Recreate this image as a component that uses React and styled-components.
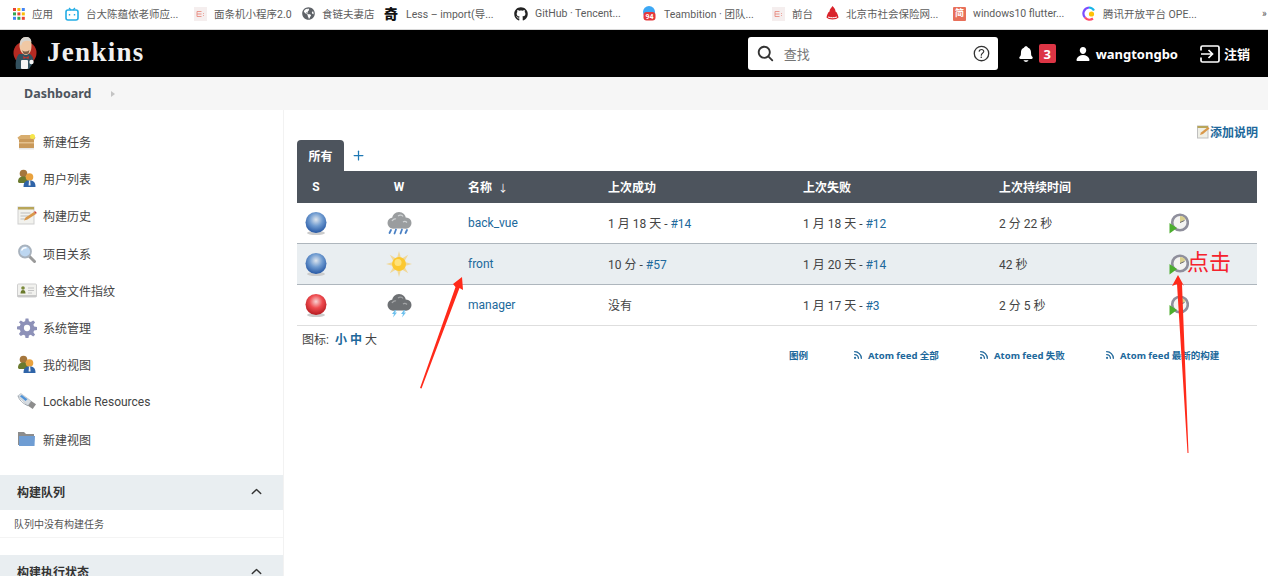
import React from 'react';
import styled, { createGlobalStyle } from 'styled-components';
import { IoSearch, IoHelpCircleOutline, IoNotifications, IoPerson, IoChevronUp } from 'react-icons/io5';
import { FaGithub, FaGlobeAmericas } from 'react-icons/fa';
import { Rss, Plus } from 'lucide-react';

const GlobalStyle = createGlobalStyle`
  html, body {
    margin: 0;
    height: 576px;
    overflow: hidden;
    background: #fff;
  }
  body {
    font-family: Roboto, "Noto Sans CJK SC", sans-serif;
    color: #333;
  }
`;

const Page = styled.div`
  position: relative;
  width: 1268px;
  height: 576px;
  overflow: hidden;
`;

/* browser bookmarks */
const BookmarkBar = styled.div`
  display: flex;
  align-items: center;
  box-sizing: border-box;
  height: 30px;
  padding: 0 0 2px 13px;
  border-bottom: 1px solid #d8d8d8;
  background: #fff;
`;

const Bookmark = styled.div`
  display: flex;
  align-items: center;
  gap: 7px;
  flex: 0 0 ${(p) => p.$w}px;
  font-size: 10.5px;
  color: #5c5c5c;
  white-space: nowrap;
`;

const FavSquare = styled.span`
  display: flex;
  align-items: center;
  justify-content: center;
  width: 13px;
  height: 14px;
  border-radius: 1px;
  background: ${(p) => p.$bg};
  color: ${(p) => p.$fg};
  font-size: 9px;
  font-weight: 700;
  line-height: 1;
`;

const QiGlyph = styled.span`
  width: 15px;
  font-size: 14px;
  font-weight: 900;
  color: #111;
  line-height: 1;
`;

const MoreMark = styled.span`
  font-size: 10px;
  color: #555;
`;

/* jenkins header */
const Header = styled.header`
  display: flex;
  align-items: center;
  height: 47px;
  padding: 0 18px 0 13px;
  background: #000;
  color: #fff;
  font-family: "Noto Sans", "Noto Sans CJK SC", sans-serif;
`;

const Brand = styled.div`
  display: flex;
  align-items: center;
  gap: 10px;
  margin-right: auto;
  padding-bottom: 2px;
`;

const BrandName = styled.span`
  font-family: "Liberation Serif", serif;
  font-size: 27px;
  font-weight: 700;
  letter-spacing: 1.3px;
  color: #f0f0f0;
`;

const SearchBox = styled.div`
  display: flex;
  align-items: center;
  width: 250px;
  height: 33px;
  padding: 0 6px 0 8px;
  box-sizing: border-box;
  border-radius: 3px;
  background: #fff;
  color: #333;
`;

const SearchHint = styled.span`
  flex: 1;
  margin-left: 9px;
  font-size: 13px;
  color: #757575;
`;

const HeaderItem = styled.div`
  display: flex;
  align-items: center;
  margin-left: ${(p) => p.$ml}px;
  gap: ${(p) => p.$gap}px;
  font-size: 13px;
  font-weight: 700;
  color: #fff;
`;

const Badge = styled.span`
  display: flex;
  align-items: center;
  justify-content: center;
  width: 17px;
  height: 19px;
  border-radius: 2px;
  background: #dc3545;
  font-size: 13px;
  font-weight: 700;
`;

/* breadcrumb */
const Crumbs = styled.div`
  display: flex;
  align-items: center;
  height: 33px;
  padding-left: 24px;
  background: #f6f6f6;
  font-family: "Noto Sans", sans-serif;
  font-size: 12.5px;
  font-weight: 700;
  color: #4d545d;
`;

const CrumbArrow = styled.span`
  margin-left: 20px;
  width: 0;
  height: 0;
  border-left: 4px solid #c4c4c4;
  border-top: 3px solid transparent;
  border-bottom: 3px solid transparent;
`;

const Body = styled.div`
  display: flex;
  height: 466px;
`;

/* left column */
const Side = styled.aside`
  flex: 0 0 283px;
  padding-top: 13px;
  border-right: 1px solid #f2f2f2;
`;

const TaskRow = styled.div`
  display: flex;
  align-items: center;
  gap: 6px;
  height: 37.2px;
  padding-left: 17px;
  font-size: 12px;
  color: #444;
`;

const TaskIcon = styled.span`
  display: flex;
  flex: 0 0 20px;
  justify-content: flex-start;
`;

const PanelHead = styled.div`
  display: flex;
  align-items: center;
  justify-content: space-between;
  box-sizing: border-box;
  height: 35px;
  margin-top: ${(p) => p.$mt}px;
  padding: 0 19px 2px 17px;
  background: #e9eef1;
  font-size: 12px;
  font-weight: 700;
  color: #333;
`;

const PanelBody = styled.div`
  display: flex;
  align-items: center;
  box-sizing: border-box;
  height: 28px;
  padding: 1px 0 0 14px;
  border-bottom: 1px solid #f4f4f4;
  font-size: 10px;
  color: #555;
`;

/* right column */
const Main = styled.main`
  flex: 1;
  padding: 13px 11px 0 13px;
`;

const AddRow = styled.div`
  display: flex;
  justify-content: flex-end;
  align-items: center;
  height: 17px;
  margin-right: -1px;
`;

const AddLink = styled.a`
  display: flex;
  align-items: center;
  font-size: 12px;
  font-weight: 700;
  color: #20689b;
`;

const Tabs = styled.div`
  display: flex;
  align-items: center;
  height: 31px;
`;

const Tab = styled.div`
  display: flex;
  align-items: center;
  justify-content: center;
  width: 47px;
  height: 31px;
  border-radius: 4px 4px 0 0;
  background: #4d545d;
  font-size: 12px;
  font-weight: 700;
  color: #fff;
`;

const AddTab = styled.span`
  display: flex;
  margin-left: 7px;
  color: #1f78b4;
`;

const Row = styled.div`
  display: grid;
  grid-template-columns: 38px 128px 140px 195px 196px 170px 93px;
  align-items: center;
  height: ${(p) => (p.$head ? 32 : 40)}px;
  background: ${(p) => (p.$head ? '#4d545d' : p.$shade ? '#e9eef1' : '#fff')};
  color: ${(p) => (p.$head ? '#fff' : '#444')};
  border-bottom: ${(p) => (p.$head ? 0 : 1)}px solid ${(p) => (p.$last ? '#dedede' : '#aeb6bd')};
  font-size: 12px;
  font-weight: ${(p) => (p.$head ? 700 : 400)};
`;

const Cell = styled.div`
  display: flex;
  align-items: center;
  justify-content: ${(p) => (p.$center ? 'center' : 'flex-start')};
  padding-left: ${(p) => (p.$pl === undefined ? 5 : p.$pl)}px;
  white-space: nowrap;
`;

const CellText = styled.span`
  margin-top: -1px;
`;

const Arrow = styled.span`
  margin-left: 6px;
  font-size: 10px;
  font-weight: 400;
`;

const Link = styled.a`
  color: #20689b;
  font-weight: ${(p) => (p.$bold ? 700 : 400)};
`;

const IconSizes = styled.div`
  display: flex;
  gap: 3px;
  padding: 4px 0 0 5px;
  height: 15px;
  font-size: 12px;
  color: #444;
`;

const Legend = styled.div`
  display: flex;
  align-items: center;
  padding-left: 492px;
  margin-top: 3px;
`;

const LegendItem = styled.a`
  display: flex;
  align-items: center;
  gap: 5px;
  flex: 0 0 ${(p) => p.$w}px;
  font-family: "Noto Sans", "Noto Sans CJK SC", sans-serif;
  font-size: 9.5px;
  font-weight: 700;
  color: #20689b;
  white-space: nowrap;
`;

/* hand drawn marks on top of the screenshot */
const Marks = styled.svg`
  position: absolute;
  left: 0;
  top: 0;
  pointer-events: none;
`;

const ClickNote = styled.span`
  position: absolute;
  left: 1187px;
  top: 248px;
  font-size: 22px;
  line-height: 30px;
  color: #f5222d;
`;

/* ---------- drawings ---------- */

const AppsIcon = () => (
  <svg width="12" height="12" viewBox="0 0 12 12">
    {[0, 1, 2].map((r) =>
      [0, 1, 2].map((c) => (
        <rect
          key={`${r}${c}`}
          x={c * 4.4}
          y={r * 4.4}
          width="3"
          height="3"
          fill={[['#ea4335', '#fbbc05', '#4285f4'], ['#34a853', '#ea4335', '#fbbc05'], ['#4285f4', '#34a853', '#ea4335']][r][c]}
        />
      ))
    )}
  </svg>
);

const BiliIcon = () => (
  <svg width="14" height="14" viewBox="0 0 14 14">
    <path d="M4 1l2 2M10 1L8 3" stroke="#23ade5" strokeWidth="1.2" />
    <rect x="1" y="3" width="12" height="10" rx="2" fill="none" stroke="#23ade5" strokeWidth="1.6" />
    <path d="M4.5 7v1.5M9.5 7v1.5" stroke="#23ade5" strokeWidth="1.4" />
  </svg>
);

const PaleFavicon = () => (
  <svg width="13" height="14" viewBox="0 0 13 14">
    <rect width="13" height="14" fill="#f5eeee" />
    <path d="M3 4.5h4.5M3 7h4.5M3 9.5h4.5M3 4.5v5" stroke="#e98b80" strokeWidth="0.9" fill="none" />
    <path d="M9.5 6v.8M9.5 8v.8" stroke="#e98b80" strokeWidth="0.9" />
  </svg>
);

const TeambitionIcon = () => (
  <svg width="15" height="15" viewBox="0 0 15 15">
    <circle cx="7" cy="6" r="6" fill="#3da8f5" />
    <rect x="1.5" y="6" width="12" height="8.5" rx="3" fill="#e4393c" />
    <text x="7.5" y="13" fontSize="7" fontWeight="700" fill="#fff" textAnchor="middle">94</text>
  </svg>
);

const BeijingIcon = () => (
  <svg width="13" height="15" viewBox="0 0 13 15">
    <path d="M6.5 0C8 2 9.5 3 9.5 5.5c2 1 2.5 4 3 6-2 2.5-10 2.5-12 0 .5-2 1-5 3-6C3.5 3 5.5 2 6.5 0z" fill="#d9232b" />
    <path d="M2 11c3 1 6 1 9 0" stroke="#fff" fill="none" />
  </svg>
);

const TencentIcon = () => (
  <svg width="14" height="15" viewBox="0 0 14 15">
    <path d="M7 1.5a6 6 0 0 0-4 10" stroke="#7c4dff" strokeWidth="2.2" fill="none" />
    <path d="M7 1.5a6 6 0 0 1 5 3" stroke="#19b5e8" strokeWidth="2.2" fill="none" />
    <path d="M3 11.5a6 6 0 0 0 8 1" stroke="#ff4d6a" strokeWidth="2.2" fill="none" />
    <circle cx="9.5" cy="8" r="2.6" fill="#ffc107" />
  </svg>
);

const JenkinsLogo = () => (
  <svg width="24" height="34" viewBox="0 0 24 34">
    <circle cx="12" cy="17" r="11.5" fill="#b52a22" />
    <path d="M3 33c-1-6 0-12 3-15h11c3 2 4 5 3 9l-4 6z" fill="#33515f" />
    <path d="M6.5 10c0-6 3-9 6.5-9s5.5 3 5.5 8c0 5-1 9-5.5 10-4-.5-6-4-6.5-9z" fill="#f0c8a4" />
    <path d="M7 8c0-4 2-7 6-7s5 2 5.5 5C15 4 11 4.5 9 7L8 10z" fill="#d8d5d0" />
    <path d="M9 14c2 2 5 2 7.5 0l-1 3.5c-2 1-4 1-5 0z" fill="#7c5a43" />
    <path d="M10 20l3 1.5 3-1.5-.5 3-2.500-1-2.500 1z" fill="#c7312b" />
    <rect x="8" y="24" width="7" height="9" rx="1" fill="#f4f4f4" />
    <circle cx="18.5" cy="26" r="2.2" fill="#f4f4f4" />
  </svg>
);

const LogoutIcon = () => (
  <svg width="20" height="18" viewBox="0 0 20 18" fill="none" stroke="#fff" strokeWidth="1.7">
    <path d="M1 5.500V2.500A1.500 1.500 0 0 1 2.500 1h15A1.500 1.500 0 0 1 19 2.500v13a1.500 1.500 0 0 1-1.500 1.500h-15A1.500 1.500 0 0 1 1 15.500v-3" />
    <path d="M1 9h11M8.500 5l4 4-4 4" />
  </svg>
);

const BoxIcon = () => (
  <svg width="19" height="16" viewBox="0 0 19 16">
    <path d="M0.5 3.5L4 1h11l3.500 2.500-1 2H1.500z" fill="#d8ad6e" />
    <rect x="2" y="5" width="15" height="9.5" rx="1" fill="#c9995a" />
    <rect x="2" y="8" width="15" height="1.5" fill="#e3c08d" />
    <rect x="2" y="14" width="15" height="1.5" fill="#e6e6e6" />
    <circle cx="15.5" cy="2.5" r="2.5" fill="#f6e64a" />
  </svg>
);

const UsersIcon = () => (
  <svg width="19" height="19" viewBox="0 0 19 19">
    <circle cx="6.5" cy="4.5" r="3.8" fill="#a5763c" />
    <path d="M1 13c0-4 2-5.500 5.500-5.500S11 9 11 14H2z" fill="#6b7a2e" />
    <circle cx="12.5" cy="8" r="3.8" fill="#e9a23e" />
    <path d="M6.500 18c0-5 2-6.500 6-6.500s6 1.500 6 6.500z" fill="#2f64a8" />
    <path d="M12 11.500h1.200l.4 5h-2z" fill="#f1f1f1" />
  </svg>
);

const NotepadIcon = () => (
  <svg width="20" height="19" viewBox="0 0 20 19">
    <rect x="1" y="1" width="16" height="17" fill="#f2f2ee" stroke="#cfcfcf" />
    <rect x="1" y="1" width="16" height="2.5" fill="#b8a65a" />
    <path d="M3.500 7h10M3.500 10h8M3.500 13h6" stroke="#bdbdbd" />
    <path d="M7 14.500l1.500-3L17 6l2 2-8.500 5.500z" fill="#d9984a" />
    <path d="M17 6l2 2 .7-1.200-1.700-1.800z" fill="#c9443a" />
  </svg>
);

const MagnifierIcon = () => (
  <svg width="20" height="19" viewBox="0 0 20 19">
    <path d="M12 12l5.500 5.500" stroke="#9a9a9a" strokeWidth="3" strokeLinecap="round" />
    <circle cx="8" cy="7.5" r="6" fill="#bcd6f0" stroke="#a8b2bd" strokeWidth="1.8" />
    <path d="M4.500 6.500c1-2 3-3 5-2.500" stroke="#fff" strokeWidth="1.5" fill="none" />
  </svg>
);

const CardIcon = () => (
  <svg width="20" height="15" viewBox="0 0 20 15">
    <rect x="0.5" y="1" width="19" height="13" rx="1" fill="#f1f1ee" stroke="#cfcfcf" />
    <rect x="0.5" y="12" width="19" height="2" fill="#c9c9c9" />
    <circle cx="6" cy="5" r="1.8" fill="#7b8a3a" />
    <path d="M3.500 10.500c0-2.500 1-3.500 2.500-3.500s2.500 1 2.500 3.500z" fill="#6a7a2c" />
    <path d="M11 5h6M11 7.500h6M11 10h4" stroke="#c4c4c4" />
  </svg>
);

const GearIcon = () => (
  <svg width="20" height="20" viewBox="0 0 21 21">
    <path
      d="M9 0.500h3l.5 3 2 .8 2.500-1.800 2 2-1.800 2.500.8 2 3 .5v3l-3 .5-.8 2 1.800 2.500-2 2-2.500-1.800-2 .8-.5 3H9l-.5-3-2-.8L4 18.800l-2-2 1.800-2.500-.8-2-3-.5v-3l3-.5.8-2L2 4.500l2-2 2.500 1.800 2-.8z"
      fill="#8d91b8"
    />
    <circle cx="10.5" cy="10.5" r="3.3" fill="#fff" />
  </svg>
);

const UsbIcon = () => (
  <svg width="20" height="18" viewBox="0 0 21 19">
    <path d="M1 3l3-2.500 11 8-3.500 5z" fill="#d6dce2" stroke="#aab2ba" strokeWidth="0.6" />
    <path d="M3 3.500l2-1.500 6 4.500-2 2z" fill="#4f93d8" />
    <path d="M11.500 13.500L15 8.500l5 3.500-3.500 5z" fill="#8d8d8d" />
    <path d="M1 3c1 4 5 8 10.500 10.500" stroke="#9aa3ab" fill="none" />
  </svg>
);

const FolderIcon = () => (
  <svg width="19" height="16" viewBox="0 0 19 16">
    <path d="M1 1h6l2 2h8v11H1z" fill="#8c8c8c" />
    <path d="M2 5h16l-.5 10H2z" fill="#6f9dd3" />
  </svg>
);

const Ball = ({ id, light, mid, dark }) => (
  <svg width="24" height="24" viewBox="0 0 24 24">
    <defs>
      <radialGradient id={id} cx="50%" cy="36%" r="62%">
        <stop offset="0%" stopColor={light} />
        <stop offset="50%" stopColor={mid} />
        <stop offset="100%" stopColor={dark} />
      </radialGradient>
    </defs>
    <ellipse cx="12" cy="22" rx="9" ry="2" fill="#ccc" />
    <circle cx="12" cy="11.5" r="10.5" fill={`url(#${id})`} />
  </svg>
);

const BlueBall = ({ id }) => <Ball id={id} light="#dfe6ee" mid="#6f9bd0" dark="#2a5ba6" />;
const RedBall = ({ id }) => <Ball id={id} light="#f8d3d3" mid="#ee4b4f" dark="#b81d22" />;

const CloudShape = ({ fill, hi }) => (
  <>
    <circle cx="7" cy="12" r="5.5" fill={fill} />
    <circle cx="13" cy="8" r="7" fill={fill} />
    <circle cx="20" cy="12" r="5.5" fill={fill} />
    <rect x="5" y="12" width="17" height="5.5" rx="2" fill={fill} />
    <path d="M6 10c1-2 3-2.500 4-2M12 5c2-1.500 4-1 5 .5M17 11c1.500-1 3-.5 4 .5" stroke={hi} strokeWidth="1.3" fill="none" />
  </>
);

const RainCloud = () => (
  <svg width="26" height="25" viewBox="0 0 26 25">
    <CloudShape fill="#9a9d9f" hi="#cfd2d4" />
    <path d="M5 19l-1.500 3M10 18.500l-1.500 4M16 18.500l-1.500 4M21 19l-1.500 3" stroke="#4a80c4" strokeWidth="1.8" strokeLinecap="round" />
  </svg>
);

const StormCloud = () => (
  <svg width="26" height="25" viewBox="0 0 26 25">
    <CloudShape fill="#6d7073" hi="#a2a4a6" />
    <path d="M9 17l-3 4h2l-1 3.500 4-5H9l1.500-2.500zM18 17l-3 4h2l-1 3.500 4-5h-2l1.500-2.500z" fill="#6ec1ee" />
  </svg>
);

const SunIcon = () => (
  <svg width="26" height="26" viewBox="0 0 26 26">
    {[0, 45, 90, 135, 180, 225, 270, 315].map((a) => (
      <path key={a} d="M13 0l2.200 8h-4.400z" fill="#f0d89a" transform={`rotate(${a} 13 13)`} />
    ))}
    <circle cx="13" cy="13" r="7" fill="#fcc82f" />
    <circle cx="12" cy="11.5" r="3.5" fill="#ffe27a" />
  </svg>
);

const BuildIcon = () => (
  <svg width="20" height="21" viewBox="0 0 20 21">
    <circle cx="11" cy="9.5" r="7.8" fill="#f4f4f2" stroke="#8f8f9c" strokeWidth="2.6" />
    <path d="M11 9.500V3a6.500 6.500 0 0 1 5.600 3.200z" fill="#d9cf8c" />
    <path d="M11 9.500l4.500-2" stroke="#666" />
    <path d="M0.500 10l7.500 5-7.500 5.500z" fill="#4cae2f" />
  </svg>
);

const EditIcon = () => (
  <svg width="13" height="14" viewBox="0 0 13 14">
    <rect x="0.5" y="1" width="10.5" height="12" fill="#efefe6" stroke="#bfbfbf" />
    <rect x="0.5" y="1" width="10.5" height="2" fill="#b8a65a" />
    <path d="M3 10l1-2.500L11 2l1.500 1.500L6 9z" fill="#d9984a" />
  </svg>
);

const bookmarks = [
  { w: 52, icon: <AppsIcon />, label: '应用' },
  { w: 129, icon: <BiliIcon />, label: '台大陈蕴侬老师应...' },
  { w: 108, icon: <PaleFavicon />, label: '面条机小程序2.0' },
  { w: 82, icon: <FaGlobeAmericas size={13} color="#5f6368" />, label: '食链夫妻店' },
  { w: 130, icon: <QiGlyph>奇</QiGlyph>, label: 'Less – import(导...' },
  { w: 128, icon: <FaGithub size={14} color="#222" />, label: 'GitHub · Tencent...' },
  { w: 130, icon: <TeambitionIcon />, label: 'Teambition · 团队...' },
  { w: 54, icon: <PaleFavicon />, label: '前台' },
  { w: 127, icon: <BeijingIcon />, label: '北京市社会保险网...' },
  { w: 129, icon: <FavSquare $bg="#e8705a" $fg="#fff">简</FavSquare>, label: 'windows10 flutter...' },
  { w: 180, icon: <TencentIcon />, label: '腾讯开放平台 OPE...' },
];

const tasks = [
  { icon: <BoxIcon />, label: '新建任务' },
  { icon: <UsersIcon />, label: '用户列表' },
  { icon: <NotepadIcon />, label: '构建历史' },
  { icon: <MagnifierIcon />, label: '项目关系' },
  { icon: <CardIcon />, label: '检查文件指纹' },
  { icon: <GearIcon />, label: '系统管理' },
  { icon: <UsersIcon />, label: '我的视图' },
  { icon: <UsbIcon />, label: 'Lockable Resources' },
  { icon: <FolderIcon />, label: '新建视图' },
];

const jobs = [
  { name: 'back_vue', ball: <BlueBall id="ball1" />, weather: <RainCloud />, ok: '1 月 18 天', okNo: '#14', fail: '1 月 18 天', failNo: '#12', time: '2 分 22 秒' },
  { name: 'front', ball: <BlueBall id="ball2" />, weather: <SunIcon />, ok: '10 分', okNo: '#57', fail: '1 月 20 天', failNo: '#14', time: '42 秒', shade: true },
  { name: 'manager', ball: <RedBall id="ball3" />, weather: <StormCloud />, ok: '没有', fail: '1 月 17 天', failNo: '#3', time: '2 分 5 秒', last: true },
];

const feeds = [
  { w: 126, label: 'Atom feed 全部' },
  { w: 126, label: 'Atom feed 失败' },
  { w: 130, label: 'Atom feed 最新的构建' },
];

function App() {
  return (
    <Page>
      <GlobalStyle />
      <BookmarkBar>
        {bookmarks.map((b) => (
          <Bookmark key={b.label} $w={b.w}>
            {b.icon}
            <span>{b.label}</span>
          </Bookmark>
        ))}
        <MoreMark>»</MoreMark>
      </BookmarkBar>

      <Header>
        <Brand>
          <JenkinsLogo />
          <BrandName>Jenkins</BrandName>
        </Brand>
        <SearchBox>
          <IoSearch size={19} />
          <SearchHint>查找</SearchHint>
          <IoHelpCircleOutline size={21} />
        </SearchBox>
        <HeaderItem $ml={19} $gap={4}>
          <IoNotifications size={18} />
          <Badge>3</Badge>
        </HeaderItem>
        <HeaderItem $ml={19} $gap={5}>
          <IoPerson size={16} />
          wangtongbo
        </HeaderItem>
        <HeaderItem $ml={22} $gap={4}>
          <LogoutIcon />
          注销
        </HeaderItem>
      </Header>

      <Crumbs>
        Dashboard
        <CrumbArrow />
      </Crumbs>

      <Body>
        <Side>
          {tasks.map((t) => (
            <TaskRow key={t.label}>
              <TaskIcon>{t.icon}</TaskIcon>
              <span>{t.label}</span>
            </TaskRow>
          ))}
          <PanelHead $mt={17}>
            构建队列
            <IoChevronUp size={15} />
          </PanelHead>
          <PanelBody>队列中没有构建任务</PanelBody>
          <PanelHead $mt={17}>
            构建执行状态
            <IoChevronUp size={15} />
          </PanelHead>
        </Side>

        <Main>
          <AddRow>
            <AddLink>
              <EditIcon />
              添加说明
            </AddLink>
          </AddRow>
          <Tabs>
            <Tab>所有</Tab>
            <AddTab>
              <Plus size={15} strokeWidth={2} />
            </AddTab>
          </Tabs>
          <Row $head>
            <Cell $center $pl={0}>S</Cell>
            <Cell $center $pl={0}>W</Cell>
            <Cell><CellText>名称<Arrow>↓</Arrow></CellText></Cell>
            <Cell><CellText>上次成功</CellText></Cell>
            <Cell><CellText>上次失败</CellText></Cell>
            <Cell><CellText>上次持续时间</CellText></Cell>
            <Cell />
          </Row>
          {jobs.map((j) => (
            <Row key={j.name} $shade={j.shade} $last={j.last}>
              <Cell $center $pl={0}>{j.ball}</Cell>
              <Cell $center $pl={0}>{j.weather}</Cell>
              <Cell><Link>{j.name}</Link></Cell>
              <Cell>
                <CellText>
                  {j.ok}
                  {j.okNo && <> - <Link>{j.okNo}</Link></>}
                </CellText>
              </Cell>
              <Cell>
                <CellText>{j.fail} - <Link>{j.failNo}</Link></CellText>
              </Cell>
              <Cell><CellText>{j.time}</CellText></Cell>
              <Cell $pl={5}><BuildIcon /></Cell>
            </Row>
          ))}
          <IconSizes>
            图标:&nbsp;
            <Link $bold>小</Link>
            <Link $bold>中</Link>
            <span>大</span>
          </IconSizes>
          <Legend>
            <LegendItem $w={64}>图例</LegendItem>
            {feeds.map((f) => (
              <LegendItem key={f.label} $w={f.w}>
                <Rss size={10} strokeWidth={3.2} />
                {f.label}
              </LegendItem>
            ))}
          </Legend>
        </Main>
      </Body>

      <Marks width="1268" height="576" viewBox="0 0 1268 576">
        <polygon points="420,388 421.5,388.5 459.5,288 463,290 462,277 453,284 455.5,287" fill="#ff2a1a" />
        <polygon points="1187.5,453 1188.5,453 1182,284 1184,286 1178,275 1172,286 1177,284" fill="#ff2a1a" />
      </Marks>
      <ClickNote>点击</ClickNote>
    </Page>
  );
}

export default App;
